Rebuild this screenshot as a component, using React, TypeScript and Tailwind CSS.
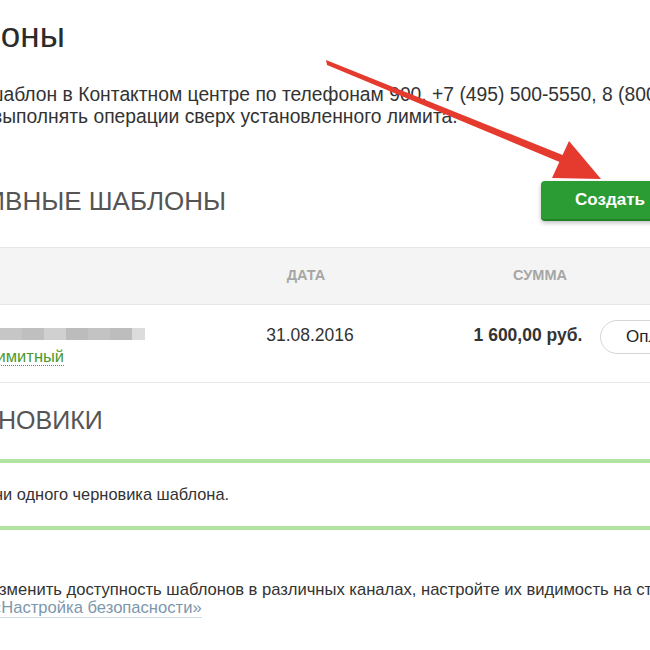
import React from 'react';

const mosaic = ['#c6c6c6', '#bfbfbf', '#d0d0d0', '#bcbcbc', '#c3c3c3', '#bdbdbd', '#dcdcdc'];

const Arrow = () => (
    <svg className="absolute left-0 top-0 pointer-events-none" width="650" height="650" viewBox="0 0 650 650">
        <polygon points="326,60 327,65 562,163 565,156" fill="#e53b2e" />
        <polygon points="552,178 569,141 601,179" fill="#e53b2e" />
    </svg>
);

const App = () => {
    return (
        <div className="relative w-[650px] h-[650px] overflow-hidden bg-white text-[#333] font-['Liberation_Sans',Arial,sans-serif]">
            {/* Title + intro */}
            <h1 className="pt-[15px] -ml-[90px] text-[35px] leading-[40px] font-normal whitespace-nowrap text-[#2b2b2b]">Шаблоны</h1>
            <div className="mt-[29px] text-[19.3px] leading-[22px] whitespace-nowrap">
                <p className="-ml-[12px]">шаблон в Контактном центре по телефонам 900, +7 (495) 500-5550, 8 (800) 555-5550.</p>
                <p className="-ml-[8px]">выполнять операции сверх установленного лимита.</p>
            </div>

            {/* Active templates header */}
            <div className="mt-[53px] h-[40px] flex items-center">
                <h2 className="flex-1 -ml-[62px] text-[26px] uppercase text-[#555] whitespace-nowrap">Активные шаблоны</h2>
                <button className="h-[40px] w-[160px] shrink-0 -mr-[51px] rounded-[4px] bg-[#2b9b33] border-b-2 border-[#238028] shadow-[0_2px_4px_rgba(0,0,0,0.25)] pl-[34px] text-left text-[17px] font-bold text-white whitespace-nowrap">
                    Создать шаблон
                </button>
            </div>

            {/* Table */}
            <div className="mt-[26px]">
                <div className="grid grid-cols-[250px_120px_110px_120px_50px] h-[58px] items-center bg-[#f4f4f4] border-y border-[#e6e6e6] text-[14.5px] font-bold uppercase text-[#a6a6a6]">
                    <div />
                    <div className="text-center pr-[8px]">Дата</div>
                    <div />
                    <div className="text-center">Сумма</div>
                    <div />
                </div>
                <div className="grid grid-cols-[250px_120px_110px_120px_50px] h-[78px] border-b border-[#e6e6e6] text-[17px]">
                    <div className="pt-[23px]">
                        <div className="flex h-[12px]">
                            {mosaic.map((c, i) => (
                                <div key={i} className={i === 6 ? 'w-[13px]' : 'w-[22px]'} style={{ background: c }} />
                            ))}
                        </div>
                        <div className="mt-[6px] -ml-[60px] whitespace-nowrap leading-[20px] text-[16.5px]">
                            <span className="text-[#4c9a2e] border-b border-dotted border-[#4c9a2e]">Сверхлимитный</span>
                        </div>
                    </div>
                    <div className="pt-[19px] text-center leading-[22px] text-[17.5px]">31.08.2016</div>
                    <div />
                    <div className="pt-[19px] text-center pr-[14px] -ml-[10px] leading-[22px] text-[17.5px] font-bold whitespace-nowrap">1 600,00 руб.</div>
                    <div className="pt-[15px]">
                        <button className="h-[34px] rounded-full border border-[#d6d6d6] bg-white pl-[25px] pr-[25px] text-[17px] text-[#222] whitespace-nowrap">
                            Оплатить
                        </button>
                    </div>
                </div>
            </div>

            {/* Drafts */}
            <h2 className="mt-[22px] -ml-[52px] text-[25px] leading-[30px] uppercase text-[#555] whitespace-nowrap">Черновики</h2>
            <div className="mt-[24px] h-[71px] border-y-4 border-[#b0e4a0] flex items-center">
                <p className="-ml-[81px] text-[16.4px] whitespace-nowrap">У вас нет ни одного черновика шаблона.</p>
            </div>

            {/* Footer note */}
            <div className="mt-[51px] text-[16.6px] leading-[18px] whitespace-nowrap">
                <p className="-ml-[64px]">Чтобы изменить доступность шаблонов в различных каналах, настройте их видимость на странице</p>
                <p className="-ml-[8px]">
                    <a className="text-[#7d97ab] border-b border-[#cfdbe4]">«Настройка безопасности»</a>
                </p>
            </div>

            <Arrow />
        </div>
    );
};

export default App;
